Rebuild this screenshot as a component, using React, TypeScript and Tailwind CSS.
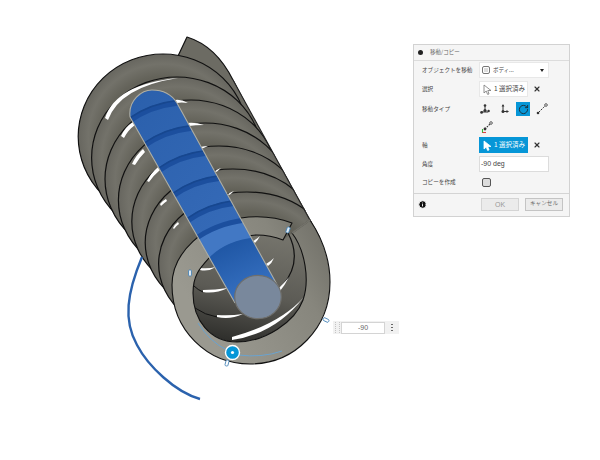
import React from 'react';
import { X, RotateCw, Info } from 'lucide-react';

const COILS = [7, 6, 5, 4, 3, 2, 1];
const BANDS = [0, 1, 2, 3, 4];

const GAPS = [
  'M105 118Q116 84 178 78Q120 87 108 120Z',
  'M121 136Q125 127 133 122L135 125Q128 130 124 138Z',
  'M132 164Q136 155 143 149L145 152Q139 158 135 165Z',
  'M147 181Q151 173 158 167L160 170Q154 175 149 182Z',
  'M160 204Q162 201 166 199L167 201Q164 203 161 206Z',
  'M173 228Q175 224 178 222L179 224Q176 226 174 229Z',
  'M187 251Q189 248 192 246L193 248Q190 250 188 252Z',
  'M175 100Q181 99 188 103Q181 102 177 103Z',
  'M187 123Q195 122 204 125Q195 125 189 126Z',
  'M200 147Q204 146 208 146Q204 148 201 149Z',
  'M215 171Q218 169 221 168Q218 171 216 172Z',
  'M228 194Q231 192 234 191Q231 194 229 195Z',
];

const INNER_GAPS = [
  'M232 340Q275 334 304 297Q280 324 232 337Z',
  'M217 317Q230 320 243 314Q230 316 217 315Z',
  'M203 292Q215 294 228 288Q215 290 203 290Z',
  'M200 270Q208 272 216 267Q208 269 200 268Z',
  'M280 291Q285 285 289 277Q285 282 278 289Z',
  'M268 266Q272 263 274 258Q271 261 266 264Z',
  'M255 243Q258 240 260 236Q257 239 253 241Z',
];

const Row = ({ label, children }: { label: string; children: React.ReactNode }) => (
  <div className="flex h-full items-center">
    <div className="w-[57px] whitespace-nowrap text-[5.6px] text-[#444]">{label}</div>
    {children}
  </div>
);

const Pointer = ({ filled }: { filled?: boolean }) => (
  <svg width="9" height="11" viewBox="0 0 9 11">
    <path d="M1 1L8 6.5H4.8L6 10L4.6 10.4L3.2 7L1 9Z" fill="#fff" stroke={filled ? '#fff' : '#777'} strokeWidth="0.8" />
  </svg>
);

const MoveIcon = ({ kind }: { kind: number }) => (
  <svg width="14" height="14" viewBox="0 0 14 14">
    {kind === 0 && (
      <g>
        <path d="M7 4V9M4 10H10" stroke="#333" strokeWidth="1" />
        <circle cx="7" cy="3.5" r="1.3" fill="#333" />
        <circle cx="3.6" cy="10.4" r="1.4" fill="#333" />
        <circle cx="7" cy="8.5" r="1.6" fill="#333" />
        <circle cx="10.6" cy="9" r="1.2" fill="#333" />
      </g>
    )}
    {kind === 1 && (
      <g>
        <path d="M6 3V9.5H11" stroke="#333" strokeWidth="1" fill="none" />
        <path d="M4.6 4.4L6 2L7.4 4.4ZM9.5 8L12 9.5L9.5 11Z" fill="#333" />
        <circle cx="6" cy="9.5" r="1.5" fill="#333" />
      </g>
    )}
    {kind === 2 && (
      <g>
        <path d="M4 10L10 4" stroke="#333" strokeWidth="1" strokeDasharray="1.6 1" />
        <circle cx="3" cy="11" r="1.3" fill="#333" />
        <circle cx="11" cy="3" r="1.3" fill="#fff" stroke="#333" strokeWidth="0.8" />
      </g>
    )}
    {kind === 3 && (
      <g>
        <path d="M5 9L10 4" stroke="#333" strokeWidth="1.1" strokeDasharray="1.6 1" />
        <circle cx="11" cy="3" r="1.3" fill="#fff" stroke="#333" strokeWidth="0.8" />
        <circle cx="5" cy="9" r="1.4" fill="#333" />
        <path d="M2.5 9V13" stroke="#3b3" strokeWidth="1.1" />
        <path d="M2.5 12.5H6" stroke="#d44" strokeWidth="1.1" />
      </g>
    )}
  </svg>
);

const Spring = () => (
  <svg className="absolute inset-0" width="600" height="460" viewBox="0 0 600 460">
    <defs>
      <radialGradient id="coil" cx="50%" cy="50%" r="50%">
        <stop offset="72%" stopColor="#636259" />
        <stop offset="88%" stopColor="#73726a" />
        <stop offset="100%" stopColor="#67665f" />
      </radialGradient>
      <linearGradient id="front" x1="0.1" y1="0.55" x2="0.95" y2="0.1">
        <stop offset="0%" stopColor="#9a9990" />
        <stop offset="70%" stopColor="#87867d" />
        <stop offset="100%" stopColor="#73726a" />
      </linearGradient>
      <linearGradient id="hole" x1="0.6" y1="0" x2="0.4" y2="1">
        <stop offset="0%" stopColor="#75746c" />
        <stop offset="55%" stopColor="#5c5b55" />
        <stop offset="100%" stopColor="#2f2f2c" />
      </linearGradient>
      <linearGradient id="rod" x1="0" y1="0" x2="1" y2="1">
        <stop offset="0%" stopColor="#2a5fab" />
        <stop offset="100%" stopColor="#3b70be" />
      </linearGradient>
      <linearGradient id="rodEnd" x1="0.25" y1="0" x2="0.75" y2="1">
        <stop offset="0%" stopColor="#1d54a2" />
        <stop offset="100%" stopColor="#3f7acb" />
      </linearGradient>
      <clipPath id="rodClip">
        <path d="M130 117C128 100 142 90 152 90C163 90 172 95 177 103L280 290L235 303Z" />
      </clipPath>
      <clipPath id="body">
        <path d="M0 0H201L233 80L320 237V460H0Z" />
      </clipPath>
    </defs>

    {/* tail of the helix behind the last turn */}
    <path d="M187 37Q216 46 233 80L246 105L178 56Z" fill="#6c6b63" stroke="#111" strokeWidth="1.2" strokeLinejoin="round" />
    <path d="M233 80L311 222L250 260L170 70Z" fill="#6c6b63" />

    <g clipPath="url(#body)">
      {COILS.map((k) => (
        <ellipse
          key={k}
          cx={261 - 14 * k}
          cy={285 - 21.2 * k}
          rx={89 - 0.6 * k}
          ry={70 + 1.8 * k}
          fill="url(#coil)"
          stroke="#111"
          strokeWidth="1.2"
        />
      ))}
    </g>
    <path d="M233 80L311 222" stroke="#222" strokeWidth="1.1" />

    {GAPS.map((d) => (
      <path key={d} d={d} fill="#fff" />
    ))}

    {/* opening seen through the front turn */}
    <path
      d="M292 233C305 250 310 280 303 300C295 322 265 342 237 342C210 342 193 320 193 293C193 275 200 268 210 257C225 243 245 235 257 235Q270 235 283 240Z"
      fill="url(#hole)"
    />
    <path d="M288 233C297 250 297 268 283 285" fill="none" stroke="#111" strokeWidth="1.2" />
    <path d="M194 286Q198 290 203 292M195 262Q197 266 200 270M195 308Q205 315 217 317" fill="none" stroke="#111" strokeWidth="1" />
    {INNER_GAPS.map((d) => (
      <path key={d} d={d} fill="#fff" />
    ))}

    {/* front turn */}
    <path
      d="M292 223Q268 214 241 218C205 224 172 252 172 285C172 330 207 364 250 364C295 364 330 328 330 282C330 260 322 238 310 220L292 233C305 250 310 280 303 300C295 322 265 342 237 342C210 342 193 320 193 293C193 275 200 268 210 257C225 243 245 235 257 235Q270 235 283 240Z"
      fill="url(#front)"
      stroke="#111"
      strokeWidth="1.1"
      strokeLinejoin="round"
    />
    <path d="M292 233L310 220" stroke="#73726a" strokeWidth="2" />

    {/* rod */}
    <g clipPath="url(#rodClip)">
      <rect x="120" y="85" width="170" height="225" fill="url(#rod)" />
      {BANDS.map((i) => (
        <g key={i}>
          <path
            d={`M${129 + i * 14.5} ${121 + i * 25}Q${150 + i * 14.5} ${106 + i * 25} ${177 + i * 14.5} ${103 + i * 25}`}
            fill="none"
            stroke="#1c4f9e"
            strokeWidth="5.5"
          />
          <path
            d={`M${129 + i * 14.5} ${118.5 + i * 25}Q${150 + i * 14.5} ${103.5 + i * 25} ${177 + i * 14.5} ${100.5 + i * 25}`}
            fill="none"
            stroke="#17478f"
            strokeWidth="1.5"
          />
        </g>
      ))}
      <path d="M195 240Q215 222 246 220L258 238Q225 240 208 259Z" fill="#4278c4" />
      <path d="M194 240Q215 224 245 220" fill="none" stroke="#1c4f9e" strokeWidth="5" />
      <path d="M208 259Q225 240 258 237L285 295L235 310Z" fill="url(#rodEnd)" />
    </g>
    <path d="M130 117C128 100 142 90 152 90C163 90 172 95 177 103L280 290M130 117L235 303" fill="none" stroke="#aeaea4" strokeWidth="1.1" />
    <ellipse cx="258" cy="297" rx="23.3" ry="21.7" fill="#79889c" stroke="#6f6f6c" strokeWidth="1.2" />

    {/* drag curve */}
    <path d="M142 257C127 293 123 320 137 345C148 366 175 392 200 399" fill="none" stroke="#2b62ad" strokeWidth="2.4" />
    <path d="M198 323Q210 342 227 350M238 355Q262 358 282 351" fill="none" stroke="#6aa3cf" strokeWidth="1" />

    {/* little tags */}
    <rect x="-1.5" y="-3" width="3" height="6" rx="1" transform="translate(190 273)" fill="#dfeaf4" stroke="#3f7fb5" strokeWidth="0.8" />
    <rect x="-1.5" y="-3" width="3" height="6" rx="1" transform="translate(288 230) rotate(20)" fill="#dfeaf4" stroke="#3f7fb5" strokeWidth="0.8" />
    <rect x="-1.5" y="-3" width="3" height="6" rx="1" transform="translate(326 320) rotate(-65)" fill="#fff" stroke="#3f7fb5" strokeWidth="0.8" />
    <rect x="-1.5" y="-3" width="3" height="6" rx="1" transform="translate(227 363) rotate(15)" fill="#fff" stroke="#3f7fb5" strokeWidth="0.8" />

    <circle cx="232.5" cy="352.5" r="7" fill="#0696d7" stroke="#fff" strokeWidth="1.4" />
    <circle cx="232.5" cy="352.5" r="1.6" fill="#fff" />
  </svg>
);

export default function App() {
  return (
    <div className="relative h-[460px] w-[600px] overflow-hidden bg-white font-['Noto_Sans_CJK_JP','Noto_Sans',sans-serif]">
      <Spring />

      {/* value box on the canvas */}
      <div className="absolute left-[333px] top-[321px] flex h-[13px] w-[66px] items-center bg-[#f1f1f1]">
        <div className="ml-[2px] h-[11px] w-[5px] border-x border-dotted border-[#c4c4c4]" />
        <div className="ml-[1px] flex h-[12px] w-[44px] items-center justify-center border border-[#d4d4d4] bg-white font-['Liberation_Sans',sans-serif] text-[7px] leading-none text-[#666]">
          -90
        </div>
        <div className="ml-[6px] flex flex-col gap-[1.5px]">
          <span className="h-[1.5px] w-[1.5px] rounded-full bg-[#555]" />
          <span className="h-[1.5px] w-[1.5px] rounded-full bg-[#555]" />
          <span className="h-[1.5px] w-[1.5px] rounded-full bg-[#555]" />
        </div>
      </div>

      {/* move / copy dialog */}
      <div className="absolute left-[413px] top-[44px] h-[173px] w-[157px] border border-[#d2d2d2] bg-[#f5f5f5]">
        <div className="flex h-[16px] items-center gap-[7px] border-b border-[#dcdcdc] pl-[4px] text-[5.5px] text-[#666]">
          <span className="h-[5px] w-[5px] rounded-full bg-[#222]" />
          <span>移動/コピー</span>
        </div>
        <div className="flex flex-col pl-[8px]">
          <div className="mt-[1px] h-[16px]">
            <Row label="オブジェクトを移動">
              <div className="flex h-[16px] w-[70px] items-center border border-[#e8e8e8] bg-white pl-[2px] text-[5.5px] text-[#444]">
                <span className="flex h-[8px] w-[8px] items-center justify-center rounded-[2px] border border-[#777]">
                  <span className="h-[4px] w-[4px] bg-[#ddd]" />
                </span>
                <span className="ml-[3px] flex-1">ボディ...</span>
                <span className="mr-[4px] h-0 w-0 border-x-[2px] border-t-[3px] border-x-transparent border-t-[#222]" />
              </div>
            </Row>
          </div>
          <div className="mt-[3px] h-[16px]">
            <Row label="選択">
              <div className="flex h-[16px] w-[49px] items-center border border-[#e8e8e8] bg-white pl-[3px] text-[6.5px] whitespace-nowrap text-[#444]">
                <Pointer />
                <span className="ml-[2px]">1 選択済み</span>
              </div>
              <X className="ml-[5px] h-[8px] w-[8px] text-[#333]" strokeWidth={3.5} />
            </Row>
          </div>
          <div className="mt-[5px] h-[14px]">
            <Row label="移動タイプ">
              <div className="-ml-[1px] flex items-center gap-[5px]">
                <MoveIcon kind={0} />
                <MoveIcon kind={1} />
                <div className="flex h-[14px] w-[14px] items-center justify-center bg-[#0696d7]">
                  <RotateCw className="h-[11px] w-[11px] text-[#1b2a33]" strokeWidth={2} />
                </div>
                <MoveIcon kind={2} />
              </div>
            </Row>
          </div>
          <div className="mt-[4px] h-[14px] pl-[58px]">
            <MoveIcon kind={3} />
          </div>
          <div className="mt-[3px] h-[16px]">
            <Row label="軸">
              <div className="flex h-[16px] w-[49px] items-center bg-[#0696d7] pl-[4px] text-[6.5px] whitespace-nowrap text-white">
                <Pointer filled />
                <span className="ml-[2px]">1 選択済み</span>
              </div>
              <X className="ml-[5px] h-[8px] w-[8px] text-[#333]" strokeWidth={3.5} />
            </Row>
          </div>
          <div className="mt-[3px] h-[16px]">
            <Row label="角度">
              <div className="flex h-[16px] w-[70px] items-center border border-[#dcdcdc] bg-white pl-[1px] font-['Liberation_Sans',sans-serif] text-[7px] text-[#444]">
                -90 deg
              </div>
            </Row>
          </div>
          <div className="mt-[5px] h-[10px]">
            <Row label="コピーを作成">
              <span className="ml-[3px] h-[9px] w-[9px] rounded-[2px] border border-[#555] bg-[#dcdcdc]" />
            </Row>
          </div>
        </div>
        <div className="mt-[6px] flex h-[21px] items-center border-t border-[#d4d4d4] pl-[4px]">
          <Info className="h-[9px] w-[9px] fill-[#111] text-white" strokeWidth={2.5} />
          <button className="ml-[54px] h-[13px] w-[38px] border border-[#d4d4d4] bg-[#ebebeb] font-['Liberation_Sans',sans-serif] text-[7px] leading-none text-[#999]">
            OK
          </button>
          <button className="ml-[6px] h-[13px] w-[38px] border border-[#c4c4c4] bg-[#ebebeb] text-[5.6px] leading-none whitespace-nowrap text-[#666]">
            キャンセル
          </button>
        </div>
      </div>
    </div>
  );
}
